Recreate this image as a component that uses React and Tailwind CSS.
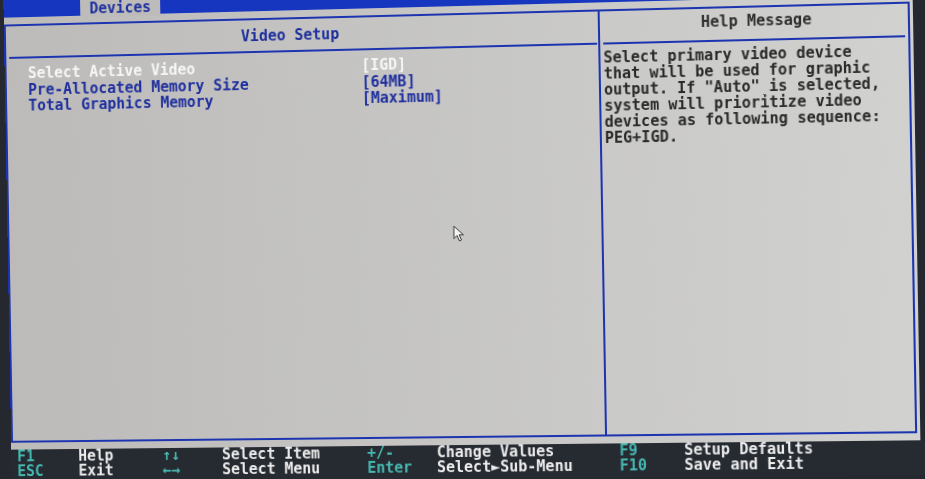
export default function App() {
  const help = [
    "Select primary video device",
    "that will be used for graphic",
    'output. If "Auto" is selected,',
    "system will prioritize video",
    "devices as following sequence:",
    "PEG+IGD.",
  ];
  const cols = [
    { w: "w-[63px]", c: "text-[#46b8b0]", a: "F1", b: "ESC" },
    { w: "w-[86px]", c: "text-[#ececec]", a: "Help", b: "Exit" },
    { w: "w-[61px]", c: "text-[#46b8b0]", a: "↑↓", b: "←→" },
    { w: "w-[147px]", c: "text-[#ececec]", a: "Select Item", b: "Select Menu" },
    { w: "w-[70px]", c: "text-[#46b8b0]", a: "+/-", b: "Enter" },
    { w: "w-[182px]", c: "text-[#ececec]", a: "Change Values", b: "Select►Sub-Menu" },
    { w: "w-[64px]", c: "text-[#46b8b0]", a: "F9", b: "F10" },
    { w: "w-[200px]", c: "text-[#ececec]", a: "Setup Defaults", b: "Save and Exit" },
  ];
  return (
    <div className="w-[925px] h-[479px] overflow-hidden relative perspective-[1000px] bg-[#25282e] font-['DejaVu_Sans_Mono',monospace] text-[15px] font-bold">
      <div className="relative w-[925px] h-[479px] flex flex-col -rotate-1 rotate-y-[-2deg]">
        <div className="flex h-[445px] shrink-0">
          <div className="w-[910px] flex flex-col bg-linear-to-r from-[#bcbbb9] to-[#d1d1cf]">
            <div className="-mt-[14px] h-[20px] shrink-0 bg-[#1636c0] flex">
              <div className="ml-[79px] w-[82px] h-[22px] bg-[#bdbcba] pt-[5px] text-center leading-[16px] text-[#1f2f9e]">
                Devices
              </div>
            </div>
            <div className="flex-1 pt-[7px] pb-[7px] flex min-h-0">
              <div className="w-[907px] h-full border-2 border-[#1c34b0] flex">
                <div className="w-[601px] h-full border-r-2 border-[#1c34b0] flex flex-col">
                  <div className="h-[33px] ml-[3px] mr-[1px] border-b-2 border-[#1c34b0] pt-[8px] pr-[20px] text-center leading-[16px] text-[#1f2f9e]">
                    Video Setup
                  </div>
                  <div className="pt-[7px] pl-[22px] flex flex-col leading-[16.5px] whitespace-pre">
                    <div className="flex">
                      <div className="w-[340px] text-[#f6f6f6]">Select Active Video</div>
                      <div className="text-[#f6f6f6]">[IGD]</div>
                    </div>
                    <div className="flex text-[#1f2f9e]">
                      <div className="w-[340px]">Pre-Allocated Memory Size</div>
                      <div>[64MB]</div>
                    </div>
                    <div className="flex text-[#1f2f9e]">
                      <div className="w-[340px]">Total Graphics Memory</div>
                      <div>[Maximum]</div>
                    </div>
                  </div>
                </div>
                <div className="flex-1 h-full flex flex-col">
                  <div className="h-[33px] mx-[3px] border-b-2 border-[#1c34b0] pt-[5px] pl-[6px] text-center leading-[16px] text-[#2e2e2e]">
                    Help Message
                  </div>
                  <div className="pt-[5px] pl-[3px] flex flex-col leading-[16px] whitespace-pre text-[#2a2a2a]">
                    {help.map((l) => (
                      <div key={l}>{l}</div>
                    ))}
                  </div>
                </div>
              </div>
            </div>
          </div>
          <div className="flex-1 bg-[#25282e]" />
        </div>
        <div className="h-[34px] shrink-0 bg-[#262a31] flex pl-[6px] leading-[15px] whitespace-pre">
          {cols.map((c) => (
            <div key={c.a} className={`${c.w} ${c.c} flex flex-col`}>
              <div>{c.a}</div>
              <div>{c.b}</div>
            </div>
          ))}
        </div>
        <svg
          className="absolute left-[453px] top-[225px]"
          width="13"
          height="18"
          viewBox="0 0 13 18"
        >
          <path
            d="M1 1 L1 13.5 L4 10.5 L6.5 16 L8.5 15 L6.2 9.8 L10.5 9.8 Z"
            fill="#f4f4f4"
            stroke="#3a3a3a"
            strokeWidth="1"
            strokeLinejoin="miter"
          />
        </svg>
      </div>
    </div>
  );
}
